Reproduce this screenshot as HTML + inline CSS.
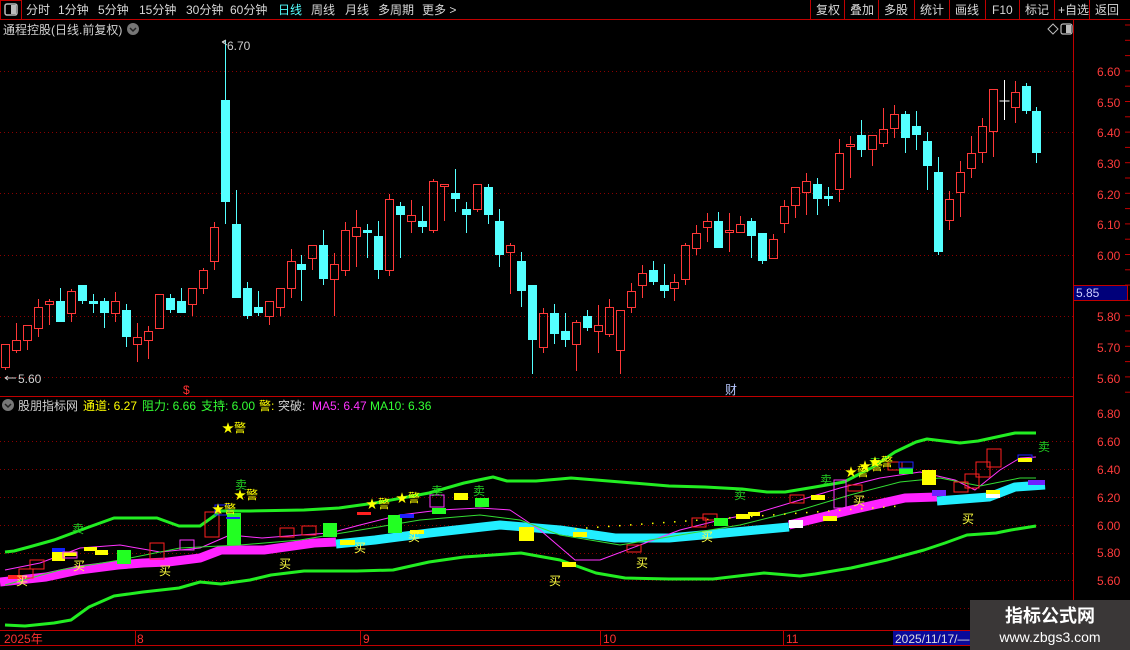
<!DOCTYPE html>
<html><head><meta charset="utf-8"><style>
html,body{margin:0;padding:0;background:#000;width:1130px;height:650px;overflow:hidden;font-family:"Liberation Sans","Noto Sans CJK SC",sans-serif}
svg{position:absolute;left:0;top:0}
</style></head><body>
<svg id="s" width="1130" height="650" viewBox="0 0 1130 650" xmlns="http://www.w3.org/2000/svg" font-family="Liberation Sans, Noto Sans CJK SC, sans-serif">
<rect width="1130" height="650" fill="#000"/>
<!-- top bar -->
<line x1="0" y1="19.5" x2="1130" y2="19.5" stroke="#c00000"/>
<rect x="0.5" y="0.5" width="21" height="19" fill="none" stroke="#c00000"/>
<rect x="5" y="4" width="12" height="11" rx="2" fill="none" stroke="#bbb" stroke-width="1.5"/><rect x="11" y="5" width="5" height="9" fill="#bbb"/>
<g font-size="12" fill="#d8d8d8">
<text x="26" y="14">分时</text><text x="58" y="14">1分钟</text><text x="98" y="14">5分钟</text><text x="139" y="14">15分钟</text><text x="186" y="14">30分钟</text><text x="230" y="14">60分钟</text><text x="278" y="14" fill="#54ffff">日线</text><text x="311" y="14">周线</text><text x="345" y="14">月线</text><text x="378" y="14">多周期</text><text x="422" y="14">更多 &gt;</text>
<text x="816" y="14">复权</text><text x="850" y="14">叠加</text><text x="884" y="14">多股</text><text x="920" y="14">统计</text><text x="955" y="14">画线</text><text x="992" y="14">F10</text><text x="1025" y="14">标记</text><text x="1058" y="14">+自选</text><text x="1095" y="14">返回</text>
</g>
<g stroke="#c00000"><line x1="810.5" y1="0" x2="810.5" y2="19"/><line x1="844.5" y1="0" x2="844.5" y2="19"/><line x1="878.5" y1="0" x2="878.5" y2="19"/><line x1="914.5" y1="0" x2="914.5" y2="19"/><line x1="949.5" y1="0" x2="949.5" y2="19"/><line x1="985.5" y1="0" x2="985.5" y2="19"/><line x1="1019.5" y1="0" x2="1019.5" y2="19"/><line x1="1054.5" y1="0" x2="1054.5" y2="19"/><line x1="1089.5" y1="0" x2="1089.5" y2="19"/></g>
<text x="3" y="34" font-size="12" fill="#d0d0d0">通程控股(日线.前复权)</text>
<circle cx="133" cy="29" r="6" fill="#777"/><path d="M130 28l3 3 3-3" stroke="#222" stroke-width="1.5" fill="none"/>
<path d="M1048 29l5-5 5 5-5 5z" fill="none" stroke="#bbb"/>
<rect x="1061" y="24" width="11" height="10" rx="2" fill="none" stroke="#bbb" stroke-width="1.2"/><rect x="1066" y="25" width="5" height="8" fill="#bbb"/>
<!-- axes -->
<line x1="1073.5" y1="20" x2="1073.5" y2="630" stroke="#c00000"/>
<line x1="0" y1="396.5" x2="1073" y2="396.5" stroke="#c00000"/>
<g id="grid" stroke="#8a0000" stroke-dasharray="1,3"></g>
<g font-size="12" fill="#ff3b3b">
<text x="1097" y="76">6.60</text><text x="1097" y="107">6.50</text><text x="1097" y="137">6.40</text><text x="1097" y="168">6.30</text><text x="1097" y="199">6.20</text><text x="1097" y="229">6.10</text><text x="1097" y="260">6.00</text><text x="1097" y="321">5.80</text><text x="1097" y="352">5.70</text><text x="1097" y="383">5.60</text>
<text x="1097" y="418">6.80</text><text x="1097" y="446">6.60</text><text x="1097" y="474">6.40</text><text x="1097" y="502">6.20</text><text x="1097" y="530">6.00</text><text x="1097" y="557">5.80</text><text x="1097" y="585">5.60</text>
</g>
<rect x="1073.5" y="285.5" width="54" height="15" fill="#00007a" stroke="#c00000"/>
<text x="1076" y="297" font-size="12" fill="#ccccff">5.85</text>
<g id="ticks" stroke="#c00000"></g>
<g id="candles"></g>
<text x="227" y="50" font-size="12" fill="#cfcfcf">6.70</text><path d="M222 42l4-2 M222 42l5 3 M222 42h4" stroke="#ccc" fill="none"/>
<text x="18" y="383" font-size="12" fill="#cfcfcf">5.60</text><path d="M5 378h11 M5 378l3-2 M5 378l3 2" stroke="#ccc" fill="none"/>
<text x="183" y="394" font-size="12" fill="#ff3030">$</text>
<text x="725" y="394" font-size="12" fill="#b8c8ff">财</text>
<!-- lower legend -->
<circle cx="8" cy="405" r="6" fill="#777"/><path d="M5 404l3 3 3-3" stroke="#222" stroke-width="1.5" fill="none"/>
<g font-size="12"><text x="18" y="410" fill="#d0d0d0">股朋指标网</text><text x="83" y="410" fill="#ffff00">通道: 6.27</text><text x="142" y="410" fill="#33ff33">阻力: 6.66</text><text x="201" y="410" fill="#33ff33">支持: 6.00</text><text x="259" y="410" fill="#ffff00">警:</text><text x="278" y="410" fill="#d0d0d0">突破:</text><text x="312" y="410" fill="#ff33ff">MA5: 6.47</text><text x="370" y="410" fill="#33ff33">MA10: 6.36</text></g>
<g id="low"></g>
<g id="lbl" font-size="12"></g>
<!-- date axis -->
<line x1="0" y1="630.5" x2="1073" y2="630.5" stroke="#c00000"/>
<line x1="0" y1="645.5" x2="1130" y2="645.5" stroke="#c00000"/>
<g stroke="#c00000"><line x1="135.5" y1="630" x2="135.5" y2="645"/><line x1="360.5" y1="630" x2="360.5" y2="645"/><line x1="600.5" y1="630" x2="600.5" y2="645"/><line x1="783.5" y1="630" x2="783.5" y2="645"/></g>
<g font-size="12" fill="#ff3030"><text x="4" y="643">2025年</text><text x="137" y="643">8</text><text x="363" y="643">9</text><text x="603" y="643">10</text><text x="786" y="643">11</text></g>
<rect x="893" y="631" width="78" height="14" fill="#0a0a9a"/>
<text x="895" y="643" font-size="12" fill="#ddd">2025/11/17/—</text>
<rect x="970" y="600" width="160" height="50" fill="#3a3737"/>
<text x="1050" y="622" font-size="18" font-weight="bold" fill="#fff" text-anchor="middle">指标公式网</text>
<text x="1050" y="642" font-size="14" fill="#fff" text-anchor="middle">www.zbgs3.com</text>
</svg>
<script>
var NS="http://www.w3.org/2000/svg";
function el(p,t,a){var e=document.createElementNS(NS,t);for(var k in a)e.setAttribute(k,a[k]);p.appendChild(e);return e;}
var g=document.getElementById('grid');
[71,132,193,255,316,377,441,469,497,525,553,580,608].forEach(function(y){el(g,'line',{x1:0,y1:y+.5,x2:1073,y2:y+.5});});
var tk=document.getElementById('ticks');
for(var y=25;y<395;y+=15.3)el(tk,'line',{x1:1125,y1:y,x2:1130,y2:y});
var D=[[344,368,344,370,'r'],[340,351,323,353,'r'],[325,341,325,350,'r'],[307,329,299,337,'r'],[301,305,299,325,'r'],[301,322,288,322,'c'],[291,314,289,322,'r'],[285,301,285,304,'c'],[301,304,294,313,'c'],[301,313,298,328,'c'],[301,314,292,322,'r'],[310,337,304,347,'c'],[337,345,323,362,'r'],[331,341,326,359,'r'],[294,329,294,329,'r'],[298,310,294,313,'c'],[301,313,288,313,'c'],[288,305,288,316,'r'],[270,289,268,294,'r'],[227,262,222,270,'r'],[100,202,40,224,'c'],[224,298,190,298,'c'],[288,316,282,319,'c'],[307,313,291,316,'c'],[301,317,301,325,'r'],[288,308,288,316,'r'],[261,289,249,298,'r'],[264,270,255,301,'c'],[245,259,246,270,'r'],[245,279,230,285,'c'],[264,280,253,316,'r'],[230,271,222,276,'r'],[227,237,210,267,'r'],[230,233,224,258,'c'],[236,270,221,279,'c'],[199,271,194,276,'r'],[206,215,202,258,'c'],[215,222,200,233,'r'],[221,227,206,233,'c'],[181,231,179,233,'r'],[184,187,184,221,'r'],[193,199,169,212,'c'],[209,215,202,233,'c'],[184,210,184,212,'r'],[187,215,184,224,'c'],[221,255,209,267,'c'],[245,253,243,294,'r'],[261,291,252,307,'c'],[285,340,285,374,'c'],[313,348,308,353,'r'],[313,334,304,344,'c'],[331,340,313,347,'c'],[322,345,320,371,'r'],[316,328,310,331,'c'],[325,332,305,353,'r'],[307,335,299,337,'r'],[310,351,310,374,'r'],[291,308,283,313,'r'],[273,286,265,298,'r'],[270,282,261,285,'c'],[285,291,264,298,'c'],[282,289,274,301,'r'],[245,280,243,285,'r'],[233,249,225,255,'r'],[221,228,213,242,'r'],[221,248,212,248,'c'],[230,233,213,252,'r'],[224,233,216,233,'r'],[221,236,218,258,'c'],[233,261,233,264,'c'],[239,259,234,259,'r'],[206,224,200,233,'r'],[187,206,187,218,'r'],[181,193,173,215,'r'],[184,199,178,215,'c'],[196,199,187,206,'c'],[153,190,139,202,'r'],[144,147,136,178,'r'],[135,150,120,157,'c'],[135,150,135,166,'r'],[129,144,108,147,'r'],[114,129,105,138,'r'],[114,138,111,153,'c'],[126,135,111,150,'c'],[141,166,132,190,'c'],[172,252,157,255,'c'],[199,221,191,230,'r'],[172,193,161,217,'r'],[153,169,136,178,'r'],[126,153,118,163,'r'],[89,132,89,157,'r'],[101,101,80,120,'w'],[92,108,81,123,'r'],[86,111,83,114,'c'],[111,153,107,163,'c']];
var cg=document.getElementById('candles');
D.forEach(function(d,i){var x=Math.round(5.3+10.97*i)+.5;var col=d[4]=='r'?'#ff3838':d[4]=='c'?'#54ffff':'#fff';
 if(d[4]=='c'){el(cg,'line',{x1:x,y1:d[2],x2:x,y2:d[3],stroke:col});el(cg,'rect',{x:x-4.5,y:d[0],width:9,height:Math.max(2,d[1]-d[0]),fill:col});}
 else if(d[4]=='w'){el(cg,'line',{x1:x,y1:d[2],x2:x,y2:d[3],stroke:col});el(cg,'line',{x1:x-5,y1:d[0],x2:x+5,y2:d[0],stroke:col});}
 else{el(cg,'line',{x1:x,y1:d[2],x2:x,y2:d[0],stroke:col});el(cg,'line',{x1:x,y1:d[1],x2:x,y2:d[3],stroke:col});el(cg,'rect',{x:x-4,y:d[0]+.5,width:8,height:Math.max(2,d[1]-d[0]-1),fill:'none',stroke:col});}
});
var L=document.getElementById('low');
function pl(pts,c,w){el(L,'polyline',{points:pts.map(function(p){return p.join(',')}).join(' '),fill:'none',stroke:c,'stroke-width':w,'stroke-linejoin':'round'});}
function R(x,y,w,h,f,s){el(L,'rect',{x:x,y:y,width:w,height:h,fill:f||'none',stroke:s||'none'});}
// ribbon
pl([[0,582],[46,577],[79,570],[118,565],[143,563],[168,562],[200,558],[221,550],[264,550],[314,543],[336,542]],'#ff22ff',9);
pl([[336,544],[375,540],[429,533],[500,525],[560,530],[615,538],[669,538],[724,533],[789,527]],'#22eeff',9);
pl([[789,525],[851,510],[905,498],[937,497]],'#ff22ff',9);
pl([[937,501],[989,497],[1015,487],[1045,485]],'#22eeff',9);
// bands
pl([[5,552],[14,551],[29,547],[54,540],[89,527],[114,518],[157,518],[179,526],[200,526],[221,511],[250,511],[304,510],[339,508],[375,503],[429,493],[464,483],[493,477],[507,481],[536,481],[560,479],[571,478],[596,480],[633,483],[669,486],[705,487],[742,489],[767,492],[785,492],[815,487],[844,482],[873,467],[895,452],[916,442],[927,439],[960,443],[978,441],[1015,433],[1036,433]],'#22ee22',3);
pl([[5,625],[25,626],[54,623],[71,620],[89,607],[114,596],[143,592],[179,588],[200,582],[221,584],[250,580],[271,575],[304,571],[357,571],[393,570],[411,566],[429,562],[464,557],[521,553],[560,560],[596,573],[625,578],[669,579],[713,579],[764,573],[800,576],[815,574],[851,568],[887,560],[924,550],[945,543],[967,535],[996,533],[1011,530],[1036,526]],'#22ee22',3);
// MA lines
pl([[5,570],[40,563],[80,548],[120,545],[160,552],[200,548],[230,535],[262,538],[300,535],[330,533],[360,525],[400,515],[440,510],[480,508],[510,510],[540,530],[575,560],[600,560],[640,545],[680,530],[720,520],[760,512],[800,500],[840,488],[880,478],[920,472],[955,480],[975,490],[1000,470],[1020,458],[1036,457]],'#ff33ff',1);
pl([[5,585],[60,570],[120,560],[180,548],[240,545],[300,540],[360,530],[420,520],[480,515],[520,520],[560,535],[620,545],[680,535],[740,525],[800,510],[850,495],[900,482],[940,478],[980,486],[1020,478],[1036,478]],'#33dd33',1);
// dots
for(var x=575;x<900;x+=11){el(L,'rect',{x:x,y:528-(x-575)*0.07,width:1.5,height:1.5,fill:'#ffff00'});}
// boxes
R(8,575,14,4,'#ff2020');R(19,569,14,9,null,'#ff2020');R(30,560,14,9,null,'#ff2020');R(52,550,13,11,'#ffff00');R(52,548,13,4,'#1020ff');R(63,552,14,4,'#ffff00');R(63,552,14,6,null,'#ff33ff');R(84,547,13,4,'#ffff00');R(95,550,13,5,'#ffff00');
R(117,550,14,14,'#22ff22');R(150,543,14,16,null,'#ff2020');R(180,540,14,10,null,'#ff33ff');R(205,512,14,25,null,'#ff2020');R(215,505,14,10,null,'#2020ff');
R(227,513,14,32,'#22ff22');R(226,517,14,2,'#2020ff');R(280,528,14,9,null,'#ff2020');R(302,526,14,9,null,'#ff2020');R(323,523,14,14,'#22ff22');R(340,540,15,5,'#ffff00');R(357,512,14,3,'#ff2020');R(388,515,14,18,'#22ff22');R(400,514,14,4,'#2020ff');R(410,530,14,4,'#ffff00');R(430,495,14,12,null,'#ff33ff');R(432,508,14,6,'#22ff22');R(454,493,14,7,'#ffff00');R(475,498,14,9,'#22ff22');
R(519,527,15,14,'#ffff00');R(562,562,14,5,'#ffff00');R(573,532,14,5,'#ffff00');R(627,545,14,7,null,'#ff2020');R(692,518,14,9,null,'#ff2020');R(703,514,14,6,null,'#ff2020');R(714,518,14,8,'#22ff22');R(736,514,14,5,'#ffff00');R(748,512,12,4,'#ffff00');R(789,520,14,8,'#fff');R(790,495,14,8,null,'#ff2020');R(811,495,14,5,'#ffff00');R(823,516,14,5,'#ffff00');R(834,480,12,28,null,'#ff33ff');R(848,485,14,6,null,'#ff2020');R(888,462,14,8,null,'#ff2020');R(899,468,14,6,'#22ff22');R(899,462,14,6,null,'#2020ff');R(922,470,14,15,'#ffff00');R(932,490,14,6,'#7020ff');R(954,482,14,10,null,'#ff2020');R(965,474,14,14,null,'#ff2020');R(976,462,14,15,null,'#ff2020');R(987,449,14,18,null,'#ff2020');R(986,490,14,8,'#fff');R(986,490,14,4,'#ffff00');R(1018,455,14,5,null,'#2020ff');R(1018,458,14,4,'#ffff00');R(1028,482,17,6,'#22eeff');R(1028,480,17,5,'#7020ff');
var lb=document.getElementById('lbl');
function T(x,y,t,c){var e=el(lb,'text',{x:x,y:y,fill:c});e.textContent=t;}
[[16,585],[73,570],[159,575],[279,568],[354,552],[408,541],[549,585],[636,567],[701,541],[853,505],[962,523]].forEach(function(p){T(p[0],p[1],'买','#ffff40');});
[[72,533],[235,489],[431,495],[473,495],[734,499],[820,484],[1038,451],[869,467]].forEach(function(p){T(p[0],p[1],'卖','#22cc22');});
[[222,432],[212,513],[234,499],[366,508],[396,502],[845,476],[859,470],[869,466]].forEach(function(p){T(p[0],p[1],'★警','#ffff00');});
</script>
</body></html>
